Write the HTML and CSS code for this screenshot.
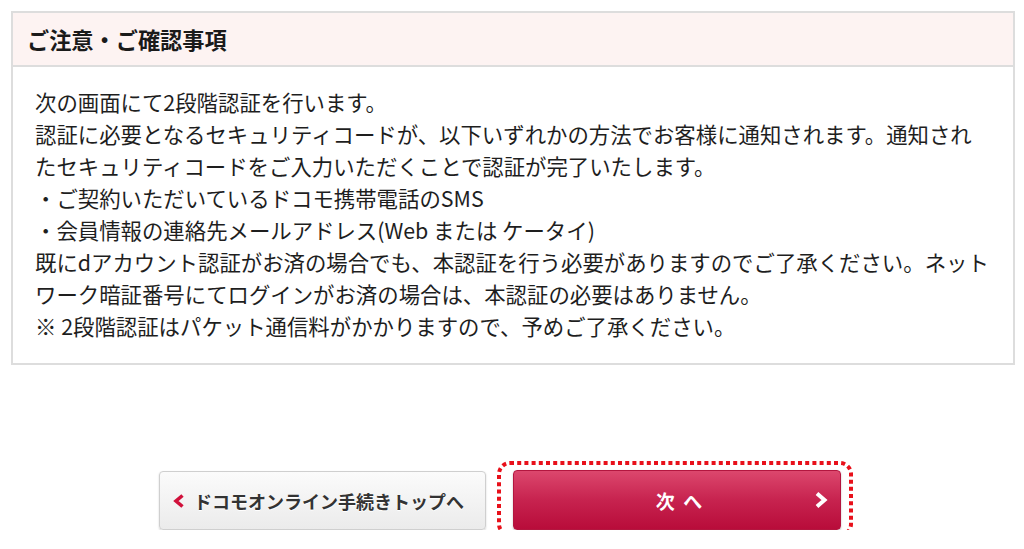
FILE: index.html
```html
<!DOCTYPE html>
<html lang="ja">
<head>
<meta charset="utf-8">
<title>ご注意・ご確認事項</title>
<link rel="stylesheet" href="styles.css">
</head>
<body>
<div class="page">
  <section class="notice">
    <h2 class="notice-title">ご注意・ご確認事項</h2>
    <div class="notice-body">
      <p>次の画面にて2段階認証を行います。<br>認証に必要となるセキュリティコードが、以下いずれかの方法でお客様に通知されます。通知され<br>たセキュリティコードをご入力いただくことで認証が完了いたします。<br>・ご契約いただいているドコモ携帯電話のSMS<br>・会員情報の連絡先メールアドレス(Web または ケータイ)<br>既にdアカウント認証がお済の場合でも、本認証を行う必要がありますのでご了承ください。ネット<br>ワーク暗証番号にてログインがお済の場合は、本認証の必要はありません。<br>※ 2段階認証はパケット通信料がかかりますので、予めご了承ください。</p>
    </div>
  </section>
  <div class="actions">
    <a class="btn btn-back" href="#">
      <svg class="chev" width="12" height="14" viewBox="0 0 12 14"><polyline points="9.5,1.5 3,7 9.5,12.5" fill="none" stroke="#d0103a" stroke-width="3.6" stroke-linejoin="miter"/></svg>
      <span>ドコモオンライン手続きトップへ</span>
    </a>
    <div class="focus-wrap">
      <a class="btn btn-next" href="#">
        <span class="next-label">次 へ</span>
        <svg class="chev chev-right" width="14" height="16" viewBox="0 0 14 16"><polyline points="3,1.5 10.5,8 3,14.5" fill="none" stroke="#ffffff" stroke-width="4" stroke-linejoin="miter"/></svg>
      </a>
      <svg class="focus-ring" width="356" height="76" viewBox="0 0 356 76"><rect x="2" y="2" width="352" height="72" rx="11" ry="11" fill="none" stroke="#e8101a" stroke-width="4" stroke-dasharray="4 3.2"/></svg>
    </div>
  </div>
</div>
</body>
</html>
```
FILE: styles.css
```css
* { box-sizing: border-box; }
html, body { margin: 0; padding: 0; background: #fff; }
body {
  font-family: "Hiragino Kaku Gothic ProN", "Noto Sans CJK JP", "Noto Sans", sans-serif;
  color: #222;
}
.page {
  padding: 11px 9px 0 11px;
}
.notice {
  border: 2px solid #dddddd;
  width: 1004px;
}
.notice-title {
  margin: 0;
  height: 54px;
  background: #fdf3f2;
  border-bottom: 2px solid #dddddd;
  font-size: 22.2px;
  font-weight: bold;
  line-height: 52px;
  padding-left: 14px;
  color: #1a1a1a;
}
.notice-body {
  padding: 19px 10px 21px 22px;
}
.notice-body p {
  margin: 0;
  font-size: 21.4px;
  line-height: 32px;
  white-space: nowrap;
  color: #1e1e1e;
}
.actions {
  display: flex;
  align-items: center;
  margin-top: 106px;
  padding-left: 148px;
  gap: 27px;
}
.btn {
  display: flex;
  align-items: center;
  text-decoration: none;
  border-radius: 4px;
  font-weight: bold;
  font-size: 18px;
}
.btn-back {
  width: 327px;
  height: 59px;
  padding-left: 13px;
  gap: 9px;
  color: #333;
  background: linear-gradient(#fbfbfb, #ebebeb);
  border: 1px solid #cfcfcf;
  box-shadow: 0 1px 2px rgba(0,0,0,0.18);
  text-shadow: 0 1px 0 #fff;
}
.focus-wrap {
  position: relative;
  margin-top: -1px;
}
.btn-next {
  position: relative;
  width: 328px;
  height: 60px;
  justify-content: center;
  color: #fff;
  background: linear-gradient(#dc476d, #c7234f 50%, #b80c3a);
  border: 1px solid #b3163f;
  box-shadow: 0 1px 2px rgba(0,0,0,0.25);
  font-size: 19px;
  letter-spacing: 2px;
}
.next-label {
  margin-left: 6px;
}
.chev-right {
  position: absolute;
  right: 12px;
  top: 21px;
}
.focus-ring {
  position: absolute;
  left: -16px;
  top: -9px;
  pointer-events: none;
}
```
